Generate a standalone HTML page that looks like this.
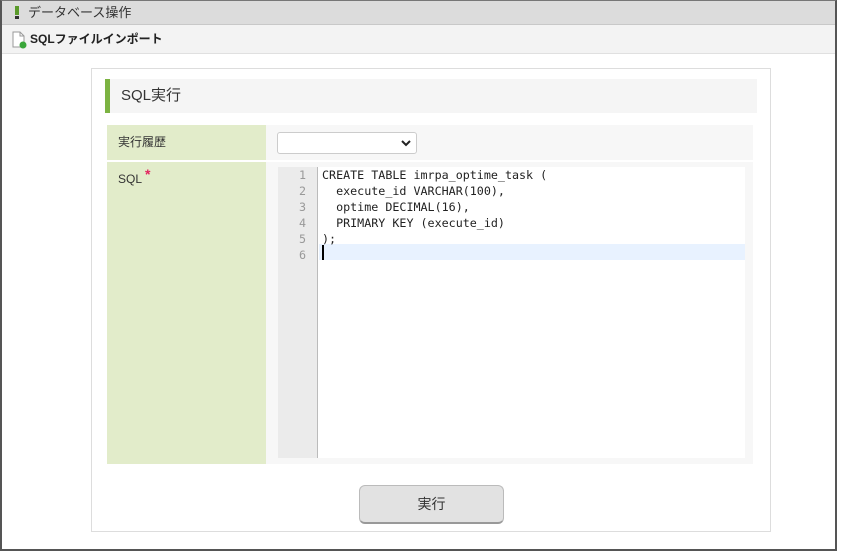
<!DOCTYPE html>
<html><head><meta charset="utf-8"><style>
*{box-sizing:border-box;margin:0;padding:0}
body{width:841px;height:558px;background:#fff;font-family:"Liberation Sans","Noto Sans CJK JP",sans-serif;position:relative;overflow:hidden}
.frame{position:absolute;left:0;top:0;width:837px;height:551px;border:2px solid #555;border-top:1px solid #777;z-index:5;pointer-events:none}
.a{position:absolute}
.h1{left:0;top:0;width:837px;height:25px;background:#dcdcdc;border-bottom:1px solid #c8c8c8;font-size:13px;color:#333;line-height:25px;padding-left:28px}
.h2{left:0;top:25px;width:837px;height:29px;background:#f3f3f3;border-bottom:1px solid #e0e0e0;font-size:12px;font-weight:bold;color:#222;line-height:29px;padding-left:30px}
.code{font-family:"DejaVu Sans Mono","Liberation Mono",monospace;font-size:11.7px;line-height:16px;color:#222;white-space:pre}
</style></head><body>
<div class="frame"></div>
<div class="a h1">データベース操作</div>
<div class="a" style="left:15px;top:6px;width:4px;height:9px;background:#5a9a2a"></div>
<div class="a" style="left:15px;top:16px;width:4px;height:3px;background:#333"></div>
<div class="a h2">SQLファイルインポート</div>
<svg class="a" style="left:11px;top:31px" width="16" height="18" viewBox="0 0 16 18"><path d="M2 1h7l4 4v11H2z" fill="#fff" stroke="#999"/><path d="M9 1v4h4" fill="none" stroke="#999"/><circle cx="12" cy="14" r="3.5" fill="#3aa63a"/></svg>
<div class="a" style="left:91px;top:68px;width:680px;height:464px;border:1px solid #ddd;background:#fff"></div>
<div class="a" style="left:105px;top:79px;width:652px;height:34px;background:#f5f5f5;font-size:15px;color:#333;line-height:34px;padding-left:16px">SQL実行</div>
<div class="a" style="left:105px;top:79px;width:5px;height:34px;background:#7cb342"></div>
<div class="a" style="left:107px;top:125px;width:646px;height:35px;background:#f7f7f7"></div>
<div class="a" style="left:107px;top:125px;width:159px;height:35px;background:#e2ecca;font-size:12px;color:#333;padding:8px 11px">実行履歴</div>
<div class="a" style="left:277px;top:132px;width:140px;height:22px;border:1px solid #ccc;border-radius:3px;background:#fff"></div>
<svg class="a" style="left:401px;top:139px" width="10" height="8"><path d="M1 2l4 4 4-4" stroke="#222" stroke-width="2" fill="none"/></svg>
<div class="a" style="left:107px;top:162px;width:646px;height:302px;background:#f7f7f7"></div>
<div class="a" style="left:107px;top:162px;width:159px;height:302px;background:#e2ecca;font-size:12px;color:#333;padding:8px 11px">SQL<span style="color:#e2245e;font-size:14px;font-weight:bold;position:relative;top:-4px;margin-left:3px">*</span></div>
<div class="a" style="left:278px;top:167px;width:467px;height:291px;background:#fff"></div>
<div class="a" style="left:278px;top:167px;width:40px;height:291px;background:#ebebeb;border-right:1px solid #bbb"></div>
<div class="a" style="left:319px;top:244px;width:426px;height:16px;background:#e8f2ff"></div>
<div class="a code" style="left:278px;top:167px;width:28px;text-align:right;color:#999">1
2
3
4
5
6</div>
<div class="a code" style="left:322px;top:167px">CREATE TABLE imrpa_optime_task (
  execute_id VARCHAR(100),
  optime DECIMAL(16),
  PRIMARY KEY (execute_id)
);</div>
<div class="a" style="left:322px;top:245px;width:2px;height:15px;background:#000"></div>
<div class="a" style="left:359px;top:485px;width:145px;height:39px;border:1px solid #bbb;border-bottom:2px solid #999;border-radius:6px;background:#e2e2e2;font-size:14px;color:#333;text-align:center;line-height:36px">実行</div>
</body></html>
